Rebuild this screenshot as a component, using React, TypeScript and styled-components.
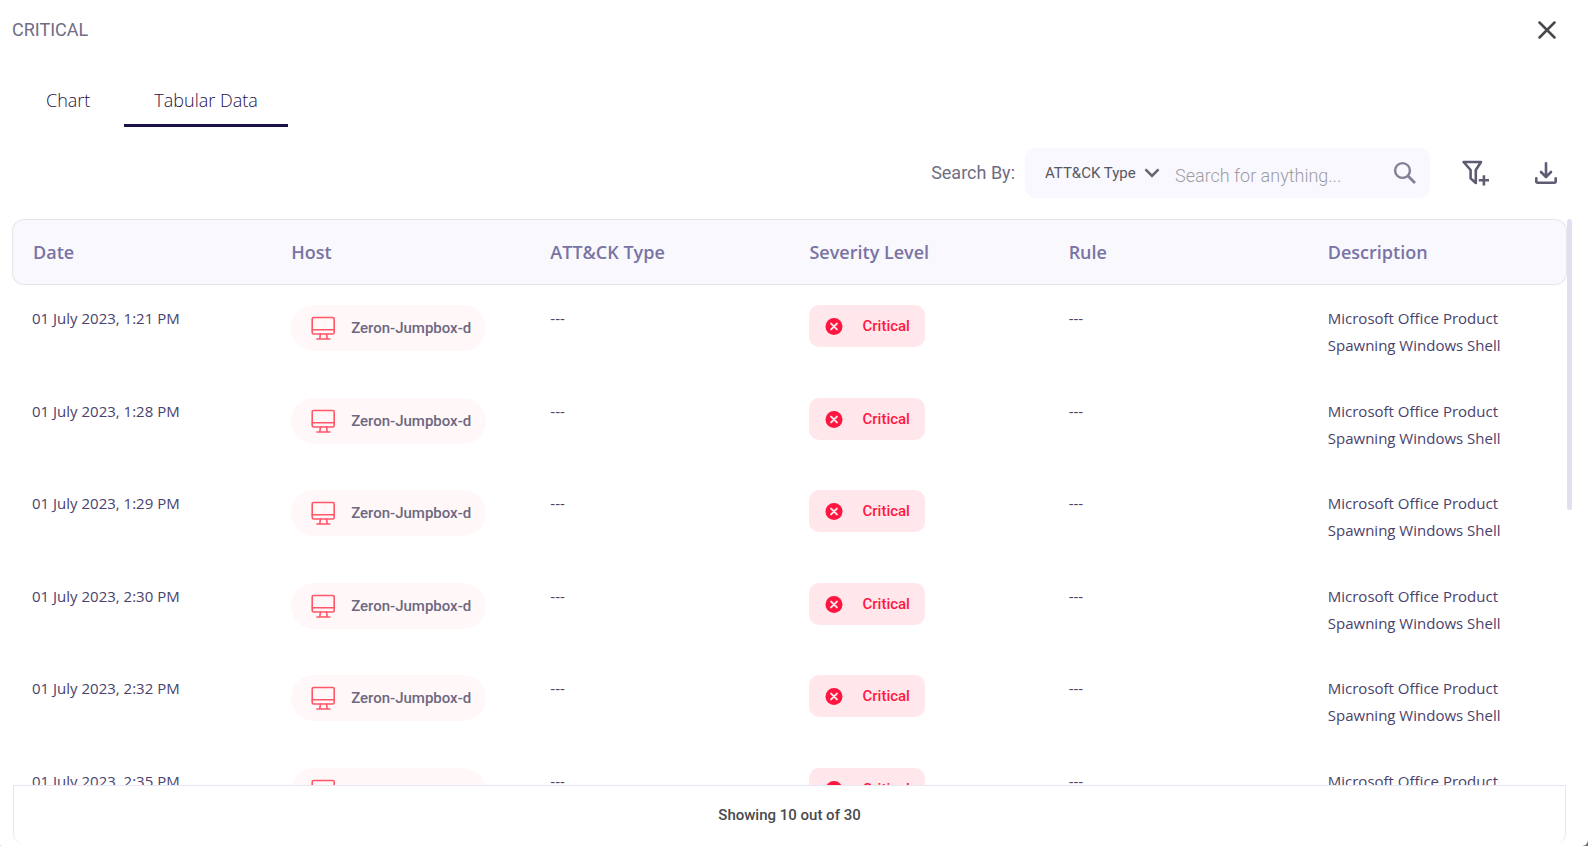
import React from "react";
import styled, { createGlobalStyle } from "styled-components";

const GlobalStyle = createGlobalStyle`
  *, *::before, *::after { box-sizing: border-box; }
  html { background: #6b6b6b; }
  body { margin: 0; font-family: Roboto, "Liberation Sans", sans-serif; }
  button, input, select { font: inherit; color: inherit; border: 0; background: none; padding: 0; margin: 0; }
  button { cursor: pointer; }
`;

const Dialog = styled.main`
  display: flex;
  flex-direction: column;
  height: 100vh;
  padding: 0 16px 2px 12px;
  background: #fff;
  border-radius: 0 0 6px 1px;
  overflow: hidden;
`;

const TitleBar = styled.header`
  display: flex;
  align-items: center;
  justify-content: space-between;
  height: 60px;
  flex: none;
  padding-right: 11px;
`;

const Title = styled.h1`
  margin: 0;
  font-size: 18px;
  font-weight: 400;
  line-height: 24px;
  color: #716d84;
`;

const IconButton = styled.button`
  display: flex;
  align-items: center;
  justify-content: center;
  width: 28px;
  height: 28px;
  color: ${(p) => p.color || "#5f5b73"};
`;

const TabList = styled.nav`
  display: flex;
  flex: none;
  height: 67px;
  align-items: flex-end;
`;

const Tab = styled.button<{ $active?: boolean }>`
  height: 53px;
  padding: 2px ${(p) => (p.$active ? "30px" : "34px")} 0;
  border-bottom: 3px solid ${(p) => (p.$active ? "#1a1147" : "transparent")};
  font-family: "Open Sans", sans-serif;
  font-size: 18px;
  line-height: 24px;
  font-weight: 300;
  color: #1a1147;
`;

const Toolbar = styled.div`
  display: flex;
  flex: none;
  align-items: center;
  justify-content: flex-end;
  height: 92px;
  padding-right: 12px;
`;

const SearchLabel = styled.label`
  margin-right: 10px;
  font-size: 18px;
  font-weight: 400;
  line-height: 24px;
  color: #716d84;
`;

const SearchBox = styled.div`
  display: flex;
  align-items: center;
  width: 405px;
  height: 50px;
  padding: 0 11px 0 20px;
  margin-right: 32px;
  border-radius: 10px;
  background: #f9f8fe;
`;

const SelectWrap = styled.div`
  display: flex;
  align-items: center;
  color: #66656d;
`;

const Select = styled.select`
  appearance: none;
  width: 115px;
  margin-right: -16px;
  outline: none;
  font-size: 15px;
  line-height: 24px;
  color: #58575e;
`;

const SearchInput = styled.input`
  flex: 1;
  min-width: 0;
  height: 50px;
  padding-top: 5px;
  margin-left: 15px;
  outline: none;
  font-size: 18px;
  font-weight: 300;
  color: #4c4b52;
  &::placeholder { color: #9d9ca3; opacity: 1; }
`;

const ToolButtons = styled.div`
  display: flex;
  gap: 42px;
`;

const Results = styled.section`
  display: flex;
  flex: 1;
  min-height: 0;
`;

const Scroller = styled.div`
  flex: 1;
  min-width: 0;
  overflow-y: auto;
  scrollbar-width: none;
`;

const ScrollTrack = styled.div`
  flex: none;
  width: 5px;
`;

const ScrollThumb = styled.div`
  height: 52%;
  max-height: 291px;
  border-radius: 3px;
  background: #e2dfef;
`;

const Table = styled.table`
  width: 100%;
  table-layout: fixed;
  border-collapse: separate;
  border-spacing: 0;
  font-family: "Open Sans", sans-serif;
`;

const HeadCell = styled.th`
  position: sticky;
  top: 0;
  z-index: 1;
  height: 66px;
  padding: 0 20px;
  text-align: left;
  font-size: 18px;
  font-weight: 600;
  line-height: 24px;
  color: #7a73a5;
  background: #f9f8fd;
  border: 1px solid #e6e5ea;
  border-width: 1px 0;
  &:first-child { border-left-width: 1px; border-radius: 12px 0 0 12px; }
  &:last-child { border-right-width: 1px; border-radius: 0 12px 12px 0; }
`;

const Row = styled.tr`
  height: 93px;
  &:nth-child(even) { height: 92px; }
`;

const Cell = styled.td`
  padding: 20px 20px 0;
  vertical-align: top;
  font-size: 15px;
  line-height: 27px;
  font-weight: 400;
  color: #4a426c;
`;

const HostPill = styled.span`
  display: inline-flex;
  align-items: center;
  gap: 16px;
  height: 46px;
  padding: 0 15px 0 20px;
  border-radius: 23px;
  background: #fff7f8;
  font-family: Roboto, sans-serif;
  font-size: 15px;
  font-weight: 500;
  line-height: 24px;
  color: #6c6880;
  white-space: nowrap;
  vertical-align: top;
`;

const SeverityBadge = styled.span`
  display: inline-flex;
  align-items: center;
  gap: 19px;
  height: 42px;
  padding: 0 15px 0 16px;
  border-radius: 10px;
  background: #ffe7eb;
  font-family: Roboto, sans-serif;
  font-size: 15px;
  font-weight: 500;
  line-height: 24px;
  color: #ff1744;
  vertical-align: top;
`;

const Footer = styled.footer`
  display: flex;
  flex: none;
  align-items: center;
  justify-content: center;
  height: 59px;
  margin: 0 6px 0 1px;
  border: 1px solid #e8e6f2;
  border-bottom-width: 0;
  border-radius: 0 0 10px 10px;
  font-size: 15px;
  font-weight: 500;
  color: #4a4a4e;
`;

const CloseIcon = () => (
  <svg width="18" height="18" viewBox="0 0 18 18" fill="none" stroke="currentColor" strokeWidth="2.5" strokeLinecap="round" aria-hidden="true">
    <path d="M1.5 1.5l15 15M16.5 1.5l-15 15" />
  </svg>
);

const ChevronIcon = () => (
  <svg width="16" height="10" viewBox="0 0 16 10" fill="none" stroke="currentColor" strokeWidth="2.6" aria-hidden="true">
    <path d="M1.5 1.3L8 7.8l6.500-6.500" />
  </svg>
);

const SearchIcon = () => (
  <svg width="24" height="24" viewBox="0 0 24 24" fill="none" stroke="#837f95" strokeWidth="2.4" aria-hidden="true">
    <circle cx="9.500" cy="9.500" r="7.400" />
    <path d="M15 15l7 7" strokeWidth="2.800" />
  </svg>
);

const FilterAddIcon = () => (
  <svg width="28" height="26" viewBox="0 0 28 26" fill="none" stroke="currentColor" strokeWidth="2.6" aria-hidden="true">
    <path d="M1.600 2h17.400l-5.200 8v13l-5.200-4.600v-8.400z" strokeLinejoin="round" />
    <path d="M16.800 20.300h10.200M21.900 15.200v10.200" strokeWidth="2.600" />
  </svg>
);

const DownloadIcon = () => (
  <svg width="22" height="22" viewBox="0 0 22 22" fill="none" stroke="currentColor" strokeWidth="2.600" strokeLinecap="round" strokeLinejoin="round" aria-hidden="true">
    <path d="M11 1.300v13M6 10l5 5 5-5" />
    <path d="M1.300 16.300v3a1.400 1.400 0 0 0 1.400 1.400h16.600a1.400 1.400 0 0 0 1.400-1.400v-3" />
  </svg>
);

const MonitorIcon = () => (
  <svg width="24" height="24" viewBox="0 0 24 24" fill="none" stroke="#ff5768" strokeWidth="1.600" strokeLinecap="round" strokeLinejoin="round" aria-hidden="true">
    <rect x="1.200" y="1.500" width="22" height="16.500" rx="1.500" />
    <path d="M1.200 13.800h22M9.400 18l-.6 4.800M15.600 18l.6 4.800M5.900 23h13" />
  </svg>
);

const CriticalIcon = () => (
  <svg width="18" height="18" viewBox="0 0 18 18" aria-hidden="true">
    <circle cx="9" cy="9.500" r="8.500" fill="#ff1540" />
    <path d="M6.100 6.600l5.800 5.800M11.900 6.600l-5.800 5.800" stroke="#ffe7eb" strokeWidth="2" strokeLinecap="round" />
  </svg>
);

const columns = ["Date", "Host", "ATT&CK Type", "Severity Level", "Rule", "Description"];
const times = ["1:21", "1:28", "1:29", "2:30", "2:32", "2:35"];

export default function App() {
  return (
    <>
      <GlobalStyle />
      <Dialog>
        <TitleBar>
          <Title>CRITICAL</Title>
          <IconButton color="#48484c" aria-label="Close"><CloseIcon /></IconButton>
        </TitleBar>
        <TabList>
          <Tab>Chart</Tab>
          <Tab $active aria-current="page">Tabular Data</Tab>
        </TabList>
        <Toolbar>
          <SearchLabel htmlFor="search-field">Search By:</SearchLabel>
          <SearchBox>
            <SelectWrap>
              <Select id="search-field" defaultValue="attack">
                <option value="attack">ATT&amp;CK Type</option>
              </Select>
              <ChevronIcon />
            </SelectWrap>
            <SearchInput type="text" placeholder="Search for anything..." aria-label="Search for anything" />
            <IconButton aria-label="Search"><SearchIcon /></IconButton>
          </SearchBox>
          <ToolButtons>
            <IconButton aria-label="Add filter"><FilterAddIcon /></IconButton>
            <IconButton aria-label="Download"><DownloadIcon /></IconButton>
          </ToolButtons>
        </Toolbar>
        <Results>
          <Scroller>
            <Table>
              <thead>
                <tr>{columns.map((c) => <HeadCell key={c} scope="col">{c}</HeadCell>)}</tr>
              </thead>
              <tbody>
                {times.map((time) => (
                  <Row key={time}>
                    <Cell>01 July 2023, {time} PM</Cell>
                    <Cell><HostPill><MonitorIcon />Zeron-Jumpbox-d</HostPill></Cell>
                    <Cell>---</Cell>
                    <Cell><SeverityBadge><CriticalIcon />Critical</SeverityBadge></Cell>
                    <Cell>---</Cell>
                    <Cell>Microsoft Office Product Spawning Windows Shell</Cell>
                  </Row>
                ))}
              </tbody>
            </Table>
          </Scroller>
          <ScrollTrack><ScrollThumb /></ScrollTrack>
        </Results>
        <Footer>Showing 10 out of 30</Footer>
      </Dialog>
    </>
  );
}
